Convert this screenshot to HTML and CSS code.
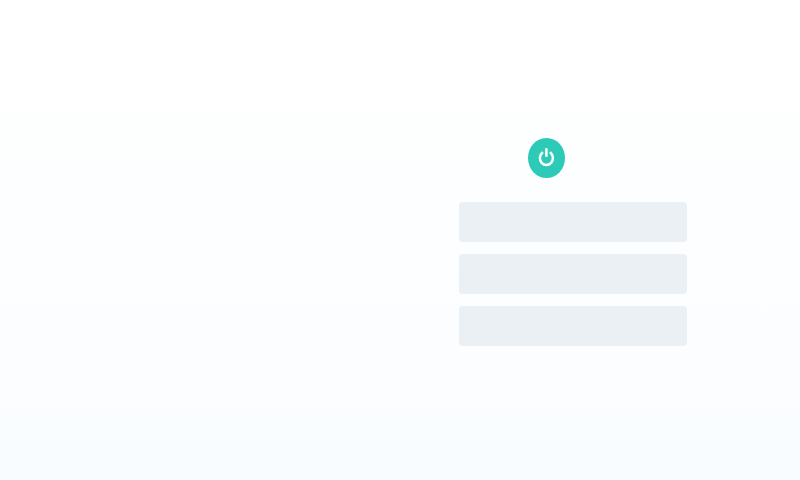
FILE: index.html
```html
<!DOCTYPE html>
<html lang="en">
<head>
<meta charset="utf-8">
<title>Sign in</title>
<link rel="stylesheet" href="styles.css">
</head>
<body>
<main class="page">
  <section class="panel">
    <div class="brand">
      <svg class="power" viewBox="0 0 37 40" aria-hidden="true">
        <path d="M14.2 14.8A6.5 6.9 0 1 0 22.6 14.8"/>
        <path d="M18.4 11.3V17.7"/>
      </svg>
    </div>
    <div class="fields">
      <div class="field"></div>
      <div class="field"></div>
      <div class="field"></div>
    </div>
  </section>
</main>
</body>
</html>
```
FILE: styles.css
```css
* {
  box-sizing: border-box;
}

body {
  margin: 0;
  font-family: "Liberation Sans", sans-serif;
}

.page {
  display: flex;
  justify-content: flex-end;
  align-items: flex-start;
  height: 480px;
  padding: 138px 113px 0 0;
  background: linear-gradient(180deg, #ffffff 0%, #fdfeff 45%, #fbfdff 82%, #f8fcff 100%);
}

.panel {
  display: flex;
  flex-direction: column;
  gap: 24px;
  width: 228px;
}

.brand {
  width: 36.8px;
  height: 40px;
  margin-left: 69px;
  border-radius: 50%;
  background: #2ecab8;
}

.power {
  display: block;
  width: 37px;
  height: 40px;
  fill: none;
  stroke: #ffffff;
  stroke-width: 2.5;
  stroke-linecap: round;
}

.fields {
  display: grid;
  gap: 12px;
}

.field {
  height: 40px;
  border-radius: 4px;
  background: #ebf0f4;
}
```
